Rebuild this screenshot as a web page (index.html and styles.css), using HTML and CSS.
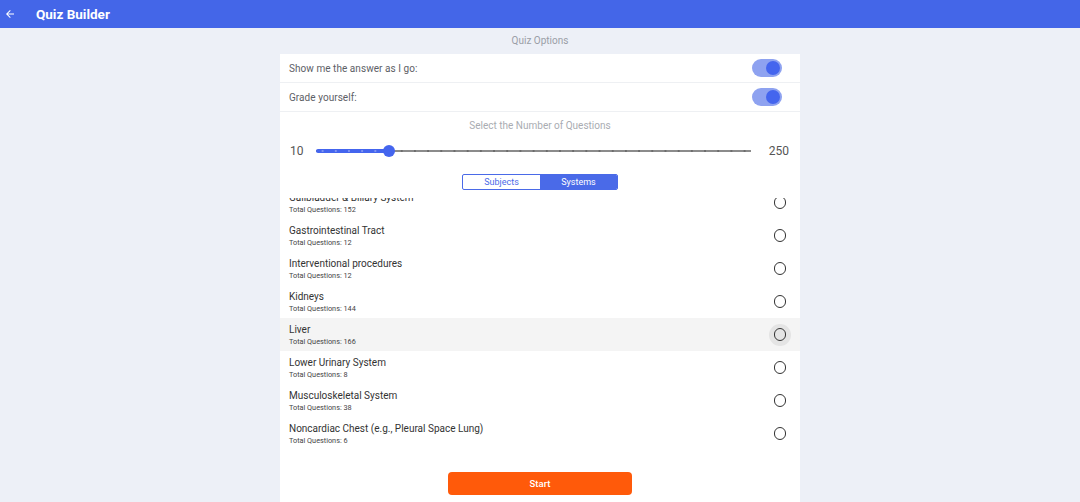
FILE: index.html
```html
<!DOCTYPE html>
<html>
<head>
<meta charset="utf-8">
<link rel="stylesheet" href="styles.css">
</head>
<body>
<header class="topbar">
  <svg class="back" width="12" height="12" viewBox="0 0 24 24"><path d="M20 11H7.83l5.59-5.59L12 4l-8 8 8 8 1.41-1.41L7.83 13H20v-2z" fill="#fff"/></svg>
  <h1 class="title">Quiz Builder</h1>
</header>
<main class="page">
  <div class="panel">
    <div class="section-title">Quiz Options</div>
    <div class="card">
      <div class="option-row">
        <span>Show me the answer as I go:</span>
        <span class="toggle"><span class="knob"></span></span>
      </div>
      <div class="option-row">
        <span>Grade yourself:</span>
        <span class="toggle"><span class="knob"></span></span>
      </div>
      <div class="slider-block">
        <div class="slider-title">Select the Number of Questions</div>
        <div class="slider-row">
          <span class="slider-min">10</span>
          <div class="slider">
            <div class="track"></div>
            <div class="track-active"></div>
            <div class="thumb"></div>
          </div>
          <span class="slider-max">250</span>
        </div>
      </div>
      <div class="segments">
        <div class="segmented">
          <span class="seg">Subjects</span>
          <span class="seg seg-active">Systems</span>
        </div>
      </div>
      <div class="list">
        <div class="list-inner">
          <div class="item"><div class="item-text"><div class="item-name">Gallbladder &amp; Biliary System</div><div class="item-sub">Total Questions: 152</div></div><span class="radio"></span></div>
          <div class="item"><div class="item-text"><div class="item-name">Gastrointestinal Tract</div><div class="item-sub">Total Questions: 12</div></div><span class="radio"></span></div>
          <div class="item"><div class="item-text"><div class="item-name">Interventional procedures</div><div class="item-sub">Total Questions: 12</div></div><span class="radio"></span></div>
          <div class="item"><div class="item-text"><div class="item-name">Kidneys</div><div class="item-sub">Total Questions: 144</div></div><span class="radio"></span></div>
          <div class="item item-hover"><div class="item-text"><div class="item-name">Liver</div><div class="item-sub">Total Questions: 166</div></div><span class="radio"></span></div>
          <div class="item"><div class="item-text"><div class="item-name">Lower Urinary System</div><div class="item-sub">Total Questions: 8</div></div><span class="radio"></span></div>
          <div class="item"><div class="item-text"><div class="item-name">Musculoskeletal System</div><div class="item-sub">Total Questions: 38</div></div><span class="radio"></span></div>
          <div class="item"><div class="item-text"><div class="item-name">Noncardiac Chest (e.g., Pleural Space Lung)</div><div class="item-sub">Total Questions: 6</div></div><span class="radio"></span></div>
        </div>
      </div>
      <div class="actions">
        <button class="start">Start</button>
      </div>
    </div>
  </div>
</main>
</body>
</html>
```
FILE: styles.css
```css
* { box-sizing: border-box; }
html, body { margin: 0; padding: 0; }
body {
  background: #edf0f7;
  font-family: Roboto, "Liberation Sans", sans-serif;
  height: 502px;
  overflow: hidden;
}
.topbar {
  height: 28px;
  background: #4466e8;
  display: flex;
  align-items: center;
  padding-left: 4px;
}
.back { display: block; margin-right: 20px; }
.title {
  margin: 0;
  color: #fff;
  font-size: 13.5px;
  font-weight: 700;
}
.page { display: flex; justify-content: center; }
.panel { width: 520px; }
.section-title {
  height: 26px;
  line-height: 26px;
  text-align: center;
  font-size: 10px;
  color: #9a9ea6;
}
.card {
  background: #fff;
  height: 448px;
}
.option-row {
  height: 29px;
  display: flex;
  align-items: center;
  justify-content: space-between;
  padding: 0 18px 0 9px;
  border-bottom: 1px solid #eef0f3;
  font-size: 10px;
  color: #5d6066;
  letter-spacing: 0.05px;
}
.toggle {
  width: 30px;
  height: 18px;
  border-radius: 9px;
  background: #8ea2f0;
  display: flex;
  align-items: center;
  justify-content: flex-end;
  padding-right: 2px;
}
.knob {
  width: 14px;
  height: 14px;
  border-radius: 50%;
  background: #4465ee;
}
.slider-block { padding-top: 7px; }
.slider-title {
  text-align: center;
  font-size: 10px;
  color: #a9acb2;
  height: 14px;
  line-height: 14px;
}
.slider-row {
  display: flex;
  align-items: center;
  height: 36px;
  padding: 0 11px 0 10px;
  font-size: 12px;
  color: #555;
}
.slider-min { width: 26px; }
.slider-max { width: 28px; text-align: right; }
.slider {
  position: relative;
  flex: 1;
  height: 12px;
  margin-right: 10px;
}
.track {
  position: absolute;
  left: 0; right: 0; top: 5px;
  height: 2px;
  background: #8b8b8b;
  background-image: radial-gradient(circle, #6c6c6c 0.8px, transparent 1px);
  background-size: 13.2px 2px;
}
.track-active {
  position: absolute;
  left: 0; top: 4px;
  width: 73px;
  height: 4px;
  border-radius: 2px;
  background: #4465ee;
  background-image: radial-gradient(circle, #7d93f2 0.8px, transparent 1px);
  background-size: 13.2px 4px;
}
.thumb {
  position: absolute;
  left: 67px; top: 0;
  width: 12px; height: 12px;
  border-radius: 50%;
  background: #4465ee;
}
.segments { display: flex; justify-content: center; padding: 5px 0 8px; }
.segmented {
  display: flex;
  width: 156px;
  height: 16px;
  border: 1px solid #4a6ae8;
  border-radius: 2px;
  overflow: hidden;
}
.seg {
  flex: 1;
  display: flex;
  align-items: center;
  justify-content: center;
  font-size: 9px;
  color: #4a6ae8;
}
.seg-active { background: #4a6ae8; color: #fff; }
.list {
  height: 252px;
  overflow: hidden;
}
.list-inner { margin-top: -12px; }
.item {
  height: 33px;
  display: flex;
  align-items: center;
  justify-content: space-between;
  padding: 0 9px 0 9px;
}
.item-hover { background: #f4f4f4; }
.item-name {
  font-size: 10px;
  color: #333;
  line-height: 13px;
}
.item-sub {
  font-size: 7.3px;
  color: #444;
  line-height: 10px;
  margin-top: 1px;
}
.radio {
  width: 22px; height: 22px;
  border-radius: 50%;
  display: flex;
  align-items: center;
  justify-content: center;
}
.radio::before {
  content: "";
  width: 10.5px; height: 10.5px;
  border: 1.4px solid #333;
  border-radius: 50%;
}
.item-hover .radio { background: #e4e4e4; }
.actions {
  display: flex;
  justify-content: center;
  padding-top: 22px;
}
.start {
  width: 184px;
  height: 23px;
  border: none;
  border-radius: 4px;
  background: #ff5a0a;
  color: #fff;
  font-family: Roboto, "Liberation Sans", sans-serif;
  font-size: 9.5px;
  font-weight: 500;
}
```
